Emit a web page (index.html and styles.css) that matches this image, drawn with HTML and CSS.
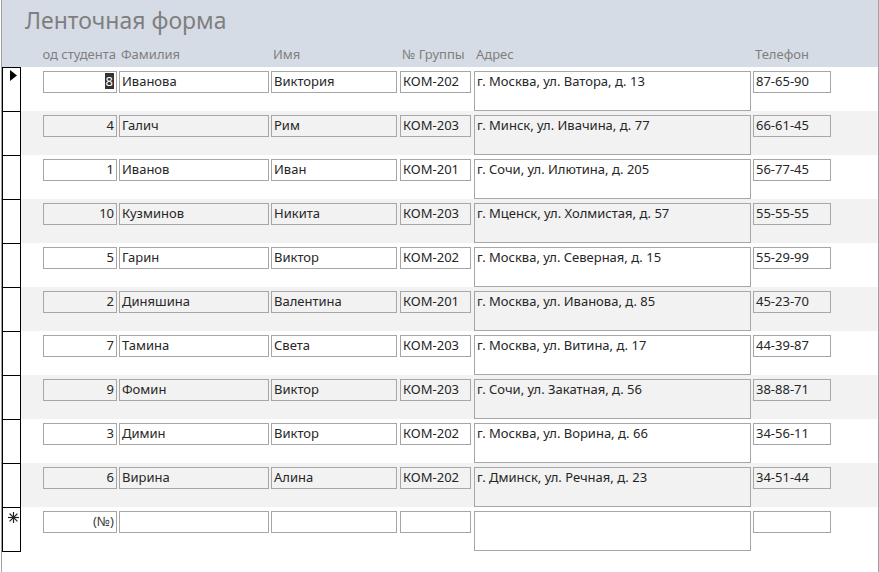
FILE: index.html
```html
<!DOCTYPE html>
<html lang="ru">
<head>
<meta charset="utf-8">
<title>Ленточная форма</title>
<link rel="stylesheet" href="styles.css">
</head>
<body>
<div class="frame">
  <header class="form-header">
    <h1 class="title">Ленточная форма</h1>
    <div class="labels">
      <div class="label c-id"><span>Код студента</span></div>
      <div class="label c-fam"><span>Фамилия</span></div>
      <div class="label c-name"><span>Имя</span></div>
      <div class="label c-grp"><span>№ Группы</span></div>
      <div class="label c-addr"><span>Адрес</span></div>
      <div class="label c-tel"><span>Телефон</span></div>
    </div>
  </header>
  <main class="records">
    <div class="record">
      <div class="selector"><svg class="arrow" width="7" height="11" viewBox="0 0 7 11"><path d="M0 0 L7 5.5 L0 11 Z" fill="#000"/></svg></div>
      <div class="fields">
        <div class="box c-id num"><span class="sel">8</span></div>
        <div class="box c-fam">Иванова</div>
        <div class="box c-name">Виктория</div>
        <div class="box c-grp">КОМ-202</div>
        <div class="box c-addr">г. Москва, ул. Ватора, д. 13</div>
        <div class="box c-tel">87-65-90</div>
      </div>
    </div>
    <div class="record alt">
      <div class="selector"></div>
      <div class="fields">
        <div class="box c-id num">4</div>
        <div class="box c-fam">Галич</div>
        <div class="box c-name">Рим</div>
        <div class="box c-grp">КОМ-203</div>
        <div class="box c-addr">г. Минск, ул. Ивачина, д. 77</div>
        <div class="box c-tel">66-61-45</div>
      </div>
    </div>
    <div class="record">
      <div class="selector"></div>
      <div class="fields">
        <div class="box c-id num">1</div>
        <div class="box c-fam">Иванов</div>
        <div class="box c-name">Иван</div>
        <div class="box c-grp">КОМ-201</div>
        <div class="box c-addr">г. Сочи, ул. Илютина, д. 205</div>
        <div class="box c-tel">56-77-45</div>
      </div>
    </div>
    <div class="record alt">
      <div class="selector"></div>
      <div class="fields">
        <div class="box c-id num">10</div>
        <div class="box c-fam">Кузминов</div>
        <div class="box c-name">Никита</div>
        <div class="box c-grp">КОМ-203</div>
        <div class="box c-addr">г. Мценск, ул. Холмистая, д. 57</div>
        <div class="box c-tel">55-55-55</div>
      </div>
    </div>
    <div class="record">
      <div class="selector"></div>
      <div class="fields">
        <div class="box c-id num">5</div>
        <div class="box c-fam">Гарин</div>
        <div class="box c-name">Виктор</div>
        <div class="box c-grp">КОМ-202</div>
        <div class="box c-addr">г. Москва, ул. Северная, д. 15</div>
        <div class="box c-tel">55-29-99</div>
      </div>
    </div>
    <div class="record alt">
      <div class="selector"></div>
      <div class="fields">
        <div class="box c-id num">2</div>
        <div class="box c-fam">Диняшина</div>
        <div class="box c-name">Валентина</div>
        <div class="box c-grp">КОМ-201</div>
        <div class="box c-addr">г. Москва, ул. Иванова, д. 85</div>
        <div class="box c-tel">45-23-70</div>
      </div>
    </div>
    <div class="record">
      <div class="selector"></div>
      <div class="fields">
        <div class="box c-id num">7</div>
        <div class="box c-fam">Тамина</div>
        <div class="box c-name">Света</div>
        <div class="box c-grp">КОМ-203</div>
        <div class="box c-addr">г. Москва, ул. Витина, д. 17</div>
        <div class="box c-tel">44-39-87</div>
      </div>
    </div>
    <div class="record alt">
      <div class="selector"></div>
      <div class="fields">
        <div class="box c-id num">9</div>
        <div class="box c-fam">Фомин</div>
        <div class="box c-name">Виктор</div>
        <div class="box c-grp">КОМ-203</div>
        <div class="box c-addr">г. Сочи, ул. Закатная, д. 56</div>
        <div class="box c-tel">38-88-71</div>
      </div>
    </div>
    <div class="record">
      <div class="selector"></div>
      <div class="fields">
        <div class="box c-id num">3</div>
        <div class="box c-fam">Димин</div>
        <div class="box c-name">Виктор</div>
        <div class="box c-grp">КОМ-202</div>
        <div class="box c-addr">г. Москва, ул. Ворина, д. 66</div>
        <div class="box c-tel">34-56-11</div>
      </div>
    </div>
    <div class="record alt">
      <div class="selector"></div>
      <div class="fields">
        <div class="box c-id num">6</div>
        <div class="box c-fam">Вирина</div>
        <div class="box c-name">Алина</div>
        <div class="box c-grp">КОМ-202</div>
        <div class="box c-addr">г. Дминск, ул. Речная, д. 23</div>
        <div class="box c-tel">34-51-44</div>
      </div>
    </div>
    <div class="record new">
      <div class="selector"><svg class="star" width="11" height="11" viewBox="0 0 11 11"><g stroke="#222" stroke-width="1.2" stroke-linecap="square"><path d="M5.5 0.5 V10.5"/><path d="M0.5 5.5 H10.5"/><path d="M2 2 L9 9"/><path d="M9 2 L2 9"/></g></svg></div>
      <div class="fields">
        <div class="box c-id num auto">(№)</div>
        <div class="box c-fam"></div>
        <div class="box c-name"></div>
        <div class="box c-grp"></div>
        <div class="box c-addr"></div>
        <div class="box c-tel"></div>
      </div>
    </div>
  </main>
</div>
</body>
</html>
```
FILE: styles.css
```css
html, body {
  margin: 0;
  padding: 0;
  background: #ffffff;
}

body {
  font-family: "Noto Sans", "Open Sans", sans-serif;
  font-size: 13px;
  color: #262626;
}

.frame {
  margin-left: 1px;
  width: 878px;
  min-height: 572px;
  box-sizing: border-box;
  border-left: 1px solid #a0a0a0;
  border-right: 1px solid #a0a0a0;
}

.form-header {
  height: 67px;
  background: #d6dce5;
  display: flex;
  flex-direction: column;
}

.title {
  margin: 0;
  padding: 5px 0 0 23px;
  height: 37px;
  box-sizing: border-box;
  font-size: 23px;
  line-height: 30px;
  font-weight: 400;
  color: #7f7f7f;
}

.labels {
  display: flex;
  padding-left: 41px;
  margin-top: 8px;
  height: 20px;
}

.label {
  color: #7f7f7f;
  line-height: 18px;
  white-space: nowrap;
  overflow: hidden;
  display: flex;
  padding-left: 2px;
  box-sizing: border-box;
}

.label.c-id {
  justify-content: flex-end;
  padding-left: 0;
  padding-right: 1px;
}

.records {
  display: flex;
  flex-direction: column;
}

.record {
  display: flex;
  height: 44px;
  background: #ffffff;
}

.record.alt {
  background: #f2f2f2;
}

.record.new {
  height: 45px;
}

.selector {
  width: 19px;
  flex: none;
  box-sizing: border-box;
  background: #ffffff;
  border-left: 1px solid #000;
  border-right: 1px solid #000;
  border-top: 1px solid #000;
}

.record.new .selector {
  border-bottom: 1px solid #000;
}

.arrow {
  display: block;
  margin: 2px 0 0 7px;
}

.star {
  display: block;
  margin: 4px 0 0 5px;
}

.fields {
  display: flex;
  align-items: flex-start;
  padding: 4px 0 0 22px;
}

.c-id { width: 74px; }
.c-fam { width: 150px; margin-left: 2px; }
.c-name { width: 126px; margin-left: 2px; }
.c-grp { width: 71px; margin-left: 3px; }
.c-addr { width: 277px; margin-left: 3px; }
.c-tel { width: 78px; margin-left: 2px; }

.box {
  height: 22px;
  box-sizing: border-box;
  border: 1px solid #a6a6a6;
  padding: 0 0 0 2px;
  line-height: 19px;
  white-space: nowrap;
  overflow: hidden;
}

.box.c-addr {
  height: 40px;
}

.box.num {
  text-align: right;
  padding: 0 2px 0 0;
}

.sel {
  background: #333333;
  color: #ffffff;
  display: inline-block;
  line-height: 16px;
  padding: 0 1px;
}

.box.auto {
  color: #404040;
}
```
